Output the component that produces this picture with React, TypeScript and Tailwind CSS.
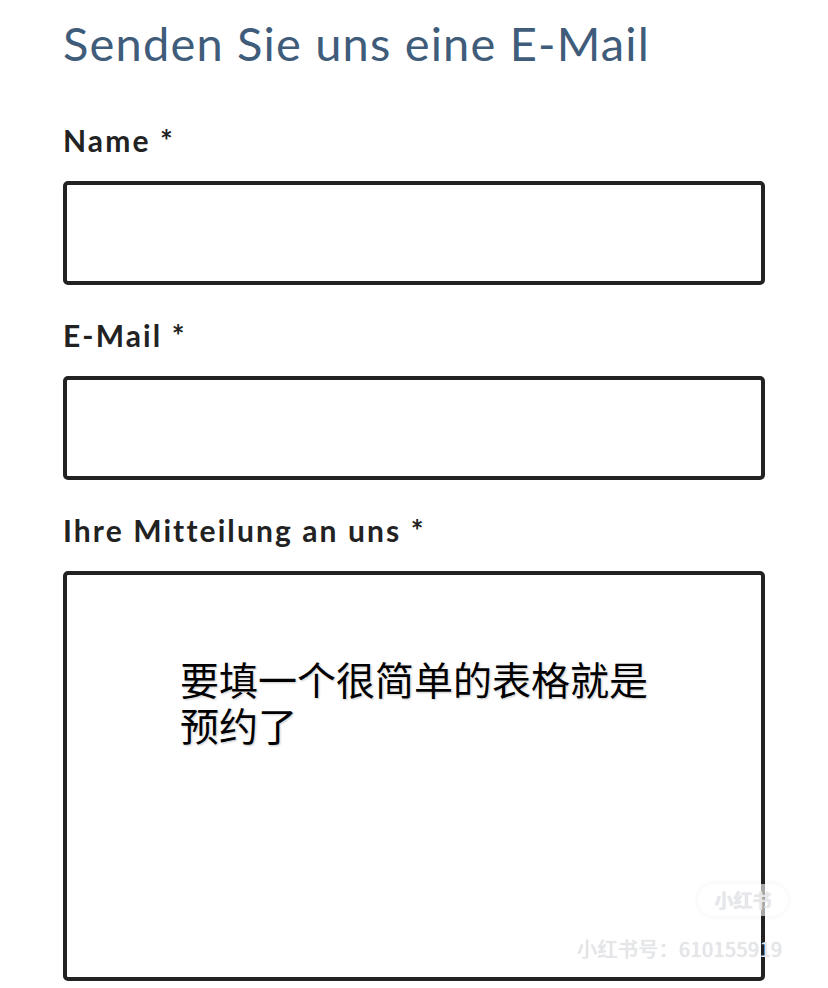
import * as React from 'react';

const lato = { fontFamily: 'Lato, "Noto Sans CJK SC", sans-serif' };
const cjk = { fontFamily: '"Noto Sans CJK SC", sans-serif' };

function Field({ label, tall, children }: { label: string; tall?: boolean; children?: React.ReactNode }) {
  return (
    <div className="flex flex-col gap-[26px]">
      <label className="text-[30px] font-bold tracking-[0.07em] text-[#222] leading-none">{label}</label>
      <div
        className={`w-full border-[4px] border-[#222] rounded-[5px] bg-white ${
          tall ? 'h-[410px] pl-[113px] pt-[80px]' : 'h-[104px]'
        }`}
      >
        {children}
      </div>
    </div>
  );
}

export default function App() {
  return (
    <div className="w-[828px] h-[988px] overflow-hidden bg-white relative" style={lato}>
      <div className="flex flex-col px-[63px] pt-[20px]">
        <h1 className="text-[47px] font-normal text-[#3f5c7a] leading-none tracking-[0.025em]">
          Senden Sie uns eine E-Mail
        </h1>
        <div className="mt-[58px] flex flex-col gap-[35px]">
          <Field label="Name *" />
          <Field label="E-Mail *" />
          <Field label="Ihre Mitteilung an uns *" tall>
            <p
              className="text-[39px] leading-[46px] text-black"
              style={{ ...cjk, textShadow: '0 0 2px #fff, 1px 1px 2px rgba(0,0,0,0.25)' }}
            >
              要填一个很简单的表格就是
              <br />
              预约了
            </p>
          </Field>
        </div>
      </div>

      {/* watermark overlay */}
      <div
        className="absolute left-[698px] top-[884px] h-[32px] w-[90px] rounded-full bg-white/60 flex items-center justify-center text-[19px] text-gray-200 font-bold"
        style={{ ...cjk, boxShadow: '0 0 6px rgba(0,0,0,0.06)', textShadow: '0 0 1px rgba(0,0,0,0.15)' }}
      >
        小红书
      </div>
      <div
        className="absolute left-[577px] top-[934px] text-[20px] text-gray-200 tracking-[0.02em]"
        style={{ ...cjk, textShadow: '0 0 1px rgba(0,0,0,0.2)' }}
      >
        小红书号：610155919
      </div>
    </div>
  );
}
